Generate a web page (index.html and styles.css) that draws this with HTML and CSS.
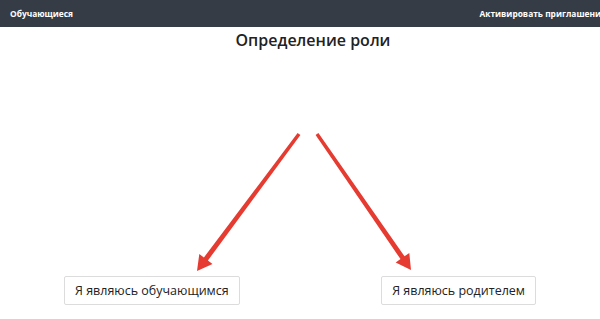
FILE: index.html
```html
<!DOCTYPE html>
<html lang="ru">

<head>
  <meta charset="UTF-8">
  <title>Определение роли</title>
  <link rel="stylesheet" href="styles.css">
</head>

<body>
  <div class="navbar">
    <a class="nav-link" href="#">Обучающиеся</a>
    <a class="nav-link nav-right" href="#">Активировать приглашение</a>
  </div>
  <div class="page">
    <h1 class="title">Определение роли</h1>
    <div class="roles">
      <button class="role-btn">Я являюсь обучающимся</button>
      <button class="role-btn">Я являюсь родителем</button>
    </div>
    <!-- стрелки-подсказки поверх страницы -->
    <svg class="arrows" width="600" height="319" viewBox="0 0 600 319">
      <polygon fill="#e53b30" points="300.4,135 207.9,260.5 212.5,264 197,271 199.3,254 203.9,257.5 297.6,133"/>
      <polygon fill="#e53b30" points="318.4,133 404.5,256.3 409.3,253 411,270 395.7,262.4 400.5,259.1 315.6,135"/>
    </svg>
  </div>
</body>

</html>
```

FILE: styles.css
```css
html, body {
  margin: 0;
  padding: 0;
  background: #fff;
  overflow: hidden;
}

body {
  font-family: "Open Sans", "Liberation Sans", sans-serif;
  width: 600px;
  height: 319px;
}

.navbar {
  height: 27px;
  background-color: #353c45;
  display: flex;
  align-items: center;
  justify-content: space-between;
  padding-left: 10px;
  white-space: nowrap;
}

.nav-link {
  color: #fff;
  font-size: 8.4px;
  font-weight: 700;
  text-decoration: none;
}

.nav-right {
  margin-right: -6px;
}

.page {
  position: relative;
  height: 292px;
}

.title {
  margin: 0;
  padding-top: 2px;
  text-align: center;
  font-size: 16px;
  font-weight: 600;
  color: #222;
  line-height: 22px;
  padding-left: 26px;
}

.roles {
  display: flex;
  justify-content: space-between;
  padding: 0 64px;
  margin-top: 225px;
}

.role-btn {
  font-family: "Open Sans", "Liberation Sans", sans-serif;
  font-size: 12.5px;
  color: #222;
  background: #fff;
  border: 1px solid #dcdcdc;
  border-radius: 2px;
  height: 29px;
  padding: 0 10px;
  cursor: pointer;
}

.arrows {
  position: absolute;
  left: 0;
  top: -27px;
  pointer-events: none;
}
```
